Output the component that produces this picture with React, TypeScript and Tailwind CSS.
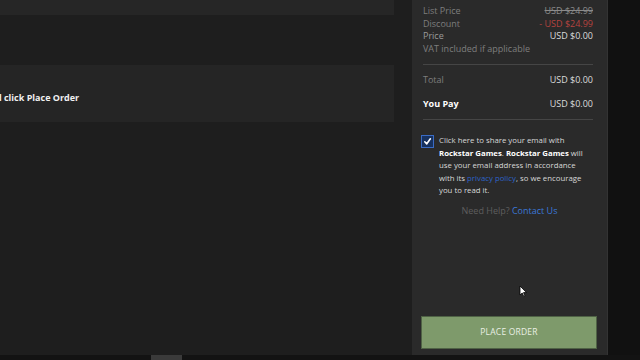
import React from 'react';

const font = { fontFamily: '"Open Sans", "Liberation Sans", sans-serif' };

const Row = ({ label, value, labelClass, valueClass }: { label: string; value: string; labelClass?: string; valueClass?: string }) => (
  <div className="flex justify-between">
    <span className={labelClass ?? 'text-[#7e7e7e]'}>{label}</span>
    <span className={valueClass ?? 'text-[#dcdcdc]'}>{value}</span>
  </div>
);

export default function App() {
  return (
    <div className="relative w-[640px] h-[360px] overflow-hidden bg-[#1e1e1e] flex flex-col" style={font}>
      <div className="flex flex-1 min-h-0">
        {/* left column */}
        <div className="w-[394px] flex flex-col">
          <div className="h-[15px] bg-[#262626]" />
          <div className="mt-[50px] h-[57px] bg-[#252525] pt-[27px] overflow-hidden">
            <div className="-ml-[100px] whitespace-nowrap text-[9px] leading-[12px] font-bold text-[#f0f0f0]">
              Review your order and click Place Order
            </div>
          </div>
        </div>

        {/* order summary */}
        <div className="ml-[18px] w-[196px] bg-[#2a2a2a] border-r border-[#333] flex flex-col px-[9px]">
          <div className="pl-[2px] pr-[5px] pt-[5px] text-[9px] leading-[12.7px]">
            <Row label="List Price" value="USD $24.99" valueClass="text-[#8a8a8a] line-through" />
            <Row label="Discount" value="- USD $24.99" valueClass="text-[#b5433f]" />
            <Row label="Price" value="USD $0.00" labelClass="text-[#9a9a9a]" />
            <div className="text-[#7e7e7e]">VAT included if applicable</div>
            <div className="mt-[8px] h-px bg-[#454545]" />
            <div className="mt-[9px]">
              <Row label="Total" value="USD $0.00" />
            </div>
            <div className="mt-[11px]">
              <Row label="You Pay" value="USD $0.00" labelClass="text-white font-bold" />
            </div>
            <div className="mt-[9px] h-px bg-[#454545]" />
          </div>

          <div className="mt-[14px] flex gap-[5px]">
            <div className="mt-[1px] w-[13px] h-[13px] shrink-0 bg-[#17315e] border border-[#3a6bc4] flex items-center justify-center">
              <svg width="9" height="9" viewBox="0 0 10 10">
                <path d="M2 5.3 L4.2 7.6 L8.2 2" fill="none" stroke="white" strokeWidth="1.8" strokeLinecap="round" strokeLinejoin="round" />
              </svg>
            </div>
            <p className="whitespace-nowrap text-[7.8px] leading-[12.5px] text-[#d8d8d8] font-medium">
              Click here to share your email with
              <br />
              <b className="text-white font-bold">Rockstar Games</b>. <b className="text-white font-bold">Rockstar Games</b> will
              <br />
              use your email address in accordance
              <br />
              with its <span className="text-[#2d63c8]">privacy policy</span>, so we encourage
              <br />
              you to read it.
            </p>
          </div>

          <div className="mt-[7px] text-center text-[9px]">
            <span className="text-[#5e5e5e]">Need Help? </span>
            <span className="text-[#3b78d8]">Contact Us</span>
          </div>

          <div className="flex-1" />
          <button className="mb-[6px] mr-[1px] h-[33px] bg-[#7e9a6b] border border-[#4f6245] text-[#e9efe4] text-[8.5px] tracking-[0.2px]">
            PLACE ORDER
          </button>
        </div>

        <div className="flex-1 bg-[#111111]" />
      </div>

      {/* bottom strip */}
      <div className="h-[5px] bg-[#131313] flex">
        <div className="ml-[151px] w-[31px] bg-[#3a3a3a]" />
      </div>

      {/* mouse cursor */}
      <svg className="absolute left-[519px] top-[285px]" width="9" height="13" viewBox="0 0 9 13">
        <path d="M1 1 L1 10 L3.2 8 L4.8 11.5 L6 11 L4.5 7.6 L7.5 7.6 Z" fill="white" stroke="black" strokeWidth="0.8" />
      </svg>
    </div>
  );
}
